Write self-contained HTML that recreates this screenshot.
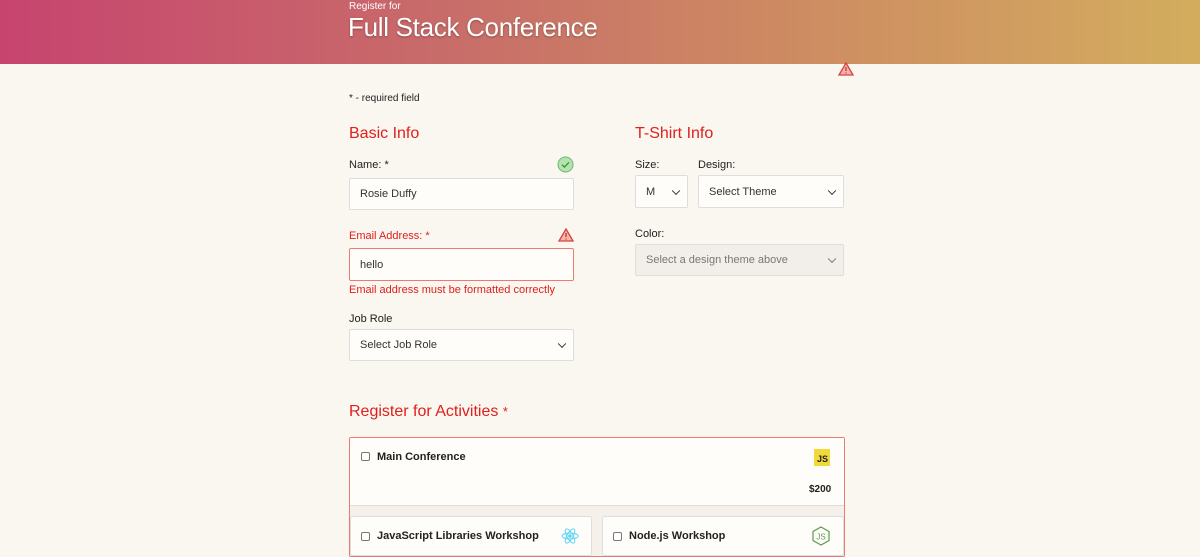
<!DOCTYPE html>
<html><head><style>
*{box-sizing:border-box;margin:0;padding:0}
body{width:1200px;height:550px;overflow:hidden;background:#faf6f0;font-family:"Liberation Sans",sans-serif;position:relative;color:#222}
.hdr{position:absolute;left:0;top:0;width:1200px;height:64px;background:linear-gradient(90deg,#c7446f 0%,#c86a6a 35%,#cd8a62 65%,#d3ad5e 100%)}
.a{position:absolute}
.sub{left:349px;top:1px;color:#fff;font-size:10px}
.title{left:348px;top:12px;color:#fff;font-size:26px;letter-spacing:-0.3px;text-shadow:0 1px 2px rgba(0,0,0,.3)}
.h{font-size:16px;color:#e0201c}
.lbl{font-size:11px;color:#222}
.inp{position:absolute;background:#fffdf9;border:1px solid #ddd;border-radius:2px;font-size:11px;color:#333;padding-left:10px;display:flex;align-items:center}
.chev{position:absolute;right:8px;top:50%;width:6px;height:6px;border-right:1.5px solid #333;border-bottom:1.5px solid #333;transform:translateY(-70%) rotate(45deg)}
.err{color:#e0201c}
.cb{position:absolute;width:9px;height:9px;border:1px solid #777;border-radius:2px;background:#fff}
.act{font-size:11px;font-weight:bold;color:#222}
</style></head><body>
<div class="hdr"></div>
<div class="a sub">Register for</div>
<div class="a title">Full Stack Conference</div>
<svg class="a" style="left:838px;top:62px" width="16" height="14" viewBox="0 0 16 14"><path d="M8 1L15 13H1Z" fill="#f2b5b0" stroke="#d9413b" stroke-width="1.3"/><path d="M8 5v4M8 10.5v1" stroke="#d9413b" stroke-width="1.5"/></svg>
<div class="a lbl" style="left:349px;top:93px;font-size:10px">* - required field</div>
<div class="a h" style="left:349px;top:125px">Basic Info</div>
<div class="a h" style="left:635px;top:125px">T-Shirt Info</div>
<div class="a lbl" style="left:349px;top:159px">Name: *</div>
<svg class="a" style="left:557px;top:156px" width="17" height="17" viewBox="0 0 17 17"><circle cx="8.5" cy="8.5" r="7.5" fill="#b5e3b0" stroke="#69b96a"/><path d="M5 8.7l2.4 2.4L12 6.3" fill="none" stroke="#3a8f3c" stroke-width="1.3"/></svg>
<div class="inp" style="left:349px;top:178px;width:225px;height:32px">Rosie Duffy</div>
<div class="a lbl err" style="left:349px;top:230px">Email Address: *</div>
<svg class="a" style="left:558px;top:228px" width="16" height="14" viewBox="0 0 16 14"><path d="M8 1L15 13H1Z" fill="#f2b5b0" stroke="#d9413b" stroke-width="1.3"/><path d="M8 5v4M8 10.5v1" stroke="#d9413b" stroke-width="1.5"/></svg>
<div class="inp" style="left:349px;top:248px;width:225px;height:33px;border-color:#ec7a70">hello</div>
<div class="a lbl err" style="left:349px;top:284px">Email address must be formatted correctly</div>
<div class="a lbl" style="left:349px;top:313px">Job Role</div>
<div class="inp" style="left:349px;top:329px;width:225px;height:32px">Select Job Role<span class="chev"></span></div>
<div class="a lbl" style="left:635px;top:159px">Size:</div>
<div class="a lbl" style="left:698px;top:159px">Design:</div>
<div class="inp" style="left:635px;top:175px;width:53px;height:33px">M<span class="chev"></span></div>
<div class="inp" style="left:698px;top:175px;width:146px;height:33px">Select Theme<span class="chev"></span></div>
<div class="a lbl" style="left:635px;top:228px">Color:</div>
<div class="inp" style="left:635px;top:244px;width:209px;height:32px;background:#f2efea;color:#777">Select a design theme above<span class="chev" style="border-color:#777"></span></div>
<div class="a h" style="left:349px;top:403px">Register for Activities <span style="font-size:13px">*</span></div>
<div class="a" style="left:349px;top:437px;width:496px;height:120px;border:1px solid #ec7a70;border-radius:2px;background:#f5f1ea"></div>
<div class="a" style="left:350px;top:438px;width:494px;height:68px;background:#fffdf9;border-bottom:1px solid #ddd"></div>
<div class="cb" style="left:361px;top:452px"></div>
<div class="a act" style="left:377px;top:451px">Main Conference</div>
<div class="a" style="left:814px;top:449px;width:16px;height:17px;background:#f2d83a;font-size:9px;font-weight:bold;padding:6px 0 0 3px;line-height:9px">JS</div>
<div class="a act" style="left:809px;top:484px;font-size:10px">$200</div>
<div class="a" style="left:350px;top:516px;width:242px;height:40px;background:#fffdf9;border:1px solid #ddd;border-radius:3px"></div>
<div class="a" style="left:602px;top:516px;width:242px;height:40px;background:#fffdf9;border:1px solid #ddd;border-radius:3px"></div>
<div class="cb" style="left:361px;top:532px"></div>
<div class="a act" style="left:377px;top:530px">JavaScript Libraries Workshop</div>
<svg class="a" style="left:561px;top:527px" width="18" height="18" viewBox="0 0 18 18" fill="none" stroke="#5ed3f3" stroke-width="1"><ellipse cx="9" cy="9" rx="8" ry="3"/><ellipse cx="9" cy="9" rx="8" ry="3" transform="rotate(60 9 9)"/><ellipse cx="9" cy="9" rx="8" ry="3" transform="rotate(120 9 9)"/><circle cx="9" cy="9" r="1.3" fill="#5ed3f3"/></svg>
<div class="cb" style="left:613px;top:532px"></div>
<div class="a act" style="left:629px;top:530px">Node.js Workshop</div>
<svg class="a" style="left:812px;top:526px" width="18" height="20" viewBox="0 0 18 20"><path d="M9 1L17 5.5V14.5L9 19L1 14.5V5.5Z" fill="none" stroke="#5a9e4b" stroke-width="1.2"/><text x="9" y="13.5" font-size="8" text-anchor="middle" fill="#5a9e4b" font-family="Liberation Sans">JS</text></svg>
</body></html>
